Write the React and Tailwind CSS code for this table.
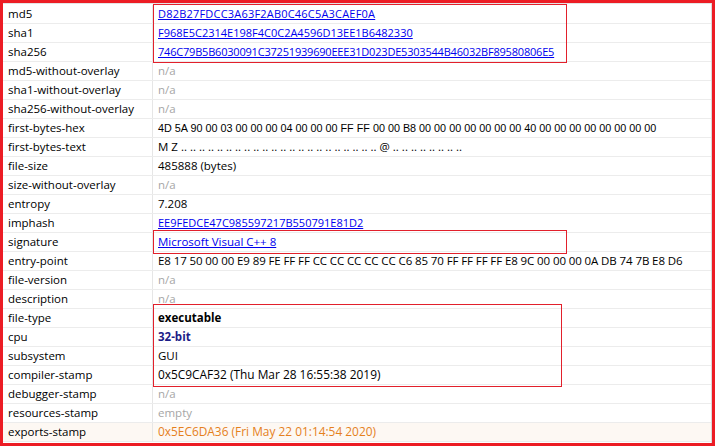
import React from 'react';

const hexBytes = '4D 5A 90 00 03 00 00 00 04 00 00 00 FF FF 00 00 B8 00 00 00 00 00 00 00 40 00 00 00 00 00 00 00 00';
const bytesText = 'M Z ' + hexBytes.split(' ').slice(2).map(b => (b === '40' ? '@' : '..')).join(' ');

const rows = [
    { label: 'md5', value: 'D82B27FDCC3A63F2AB0C46C5A3CAEF0A', kind: 'hash', extra: 'tracking-[0.2px]' },
    { label: 'sha1', value: 'F968E5C2314E198F4C0C2A4596D13EE1B6482330', kind: 'hash' },
    { label: 'sha256', value: '746C79B5B6030091C37251939690EEE31D023DE5303544B46032BF89580806E5', kind: 'hash', extra: 'tracking-[-0.2px]' },
    { label: 'md5-without-overlay', value: 'n/a', kind: 'muted' },
    { label: 'sha1-without-overlay', value: 'n/a', kind: 'muted' },
    { label: 'sha256-without-overlay', value: 'n/a', kind: 'muted' },
    { label: 'first-bytes-hex', value: hexBytes, kind: 'hex' },
    { label: 'first-bytes-text', value: bytesText },
    { label: 'file-size', value: '485888 (bytes)' },
    { label: 'size-without-overlay', value: 'n/a', kind: 'muted' },
    { label: 'entropy', value: '7.208' },
    { label: 'imphash', value: 'EE9FEDCE47C985597217B550791E81D2', kind: 'hash' },
    { label: 'signature', value: 'Microsoft Visual C++ 8', kind: 'link' },
    { label: 'entry-point', value: 'E8 17 50 00 00 E9 89 FE FF FF CC CC CC CC CC C6 85 70 FF FF FF FF E8 9C 00 00 00 0A DB 74 7B E8 D6', extra: 'tracking-[-0.1px]' },
    { label: 'file-version', value: 'n/a', kind: 'muted' },
    { label: 'description', value: 'n/a', kind: 'muted' },
    { label: 'file-type', value: 'executable', kind: 'bold' },
    { label: 'cpu', value: '32-bit', kind: 'boldBlue' },
    { label: 'subsystem', value: 'GUI' },
    { label: 'compiler-stamp', value: '0x5C9CAF32 (Thu Mar 28 16:55:38 2019)', kind: 'stamp' },
    { label: 'debugger-stamp', value: 'n/a', kind: 'muted' },
    { label: 'resources-stamp', value: 'empty', kind: 'muted' },
    { label: 'exports-stamp', value: '0x5EC6DA36 (Fri May 22 01:14:54 2020)', kind: 'warn' },
];

const valueClass = {
    hash: 'text-[#0000ee] underline text-[11px]',
    link: 'text-[#0000ee] underline',
    muted: 'text-[#a6a6a6]',
    hex: "font-['Liberation_Sans',sans-serif] text-[10.8px] text-black",
    bold: 'font-bold text-black',
    boldBlue: 'font-bold text-[#1c1c87]',
    stamp: 'text-black text-[11.9px]',
    warn: 'text-[#e5801c] text-[11.9px]',
};

export default function App() {
    return (
        <div className="relative w-[715px] h-[446px] bg-white border-t-[3px] border-l-[3px] border-r-[3px] border-b-[3px] border-[#ec1c24] font-['Open_Sans','Noto_Sans',sans-serif] text-[11.5px] text-black overflow-hidden">
            <div className="h-full border-r border-[#d9d9d9]">
                <div className="h-[2px] border-t border-[#e4e4e4]" />
                {rows.map((row) => (
                    <div
                        key={row.label}
                        className={`flex h-[19px] border-b border-[#ececec] ${row.kind === 'warn' ? 'bg-[#fdf8f3]' : ''}`}
                    >
                        <div className="w-[150px] shrink-0 flex items-center pl-[5px] border-r border-[#e6e6e6] whitespace-nowrap">
                            {row.label}
                        </div>
                        <div className={`flex-1 flex items-center pl-[5px] whitespace-nowrap ${valueClass[row.kind] || 'text-black'} ${row.extra || ''}`}>
                            {row.value}
                        </div>
                    </div>
                ))}
            </div>

            {/* highlight boxes */}
            <div className="absolute left-[150px] top-[1px] w-[414px] h-[59px] border border-[#e2202b]" />
            <div className="absolute left-[150px] top-[227px] w-[414px] h-[24px] border border-[#e2202b]" />
            <div className="absolute left-[150px] top-[301px] w-[409px] h-[83px] border border-[#e2202b]" />
        </div>
    );
}
